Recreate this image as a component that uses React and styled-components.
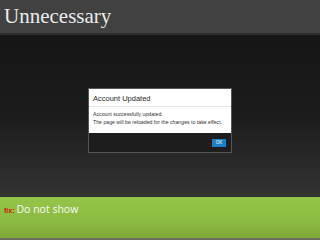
import React from 'react'
import styled, { createGlobalStyle } from 'styled-components'

const Global = createGlobalStyle`
  html, body { margin: 0; padding: 0; }
  body { width: 320px; height: 240px; overflow: hidden; background: #1a1a1a; }
`

const Slide = styled.div`
  width: 320px;
  height: 240px;
  display: flex;
  flex-direction: column;
`

const Header = styled.div`
  height: 33px;
  background: #414141;
  border-bottom: 2px solid #2d2d2d;
  display: flex;
  align-items: center;
  padding-left: 4px;
  font-family: "Liberation Serif", serif;
  font-size: 21px;
  color: #ececec;
`

const Stage = styled.div`
  flex: 1;
  background: linear-gradient(to bottom, #151515 0%, #1c1c1c 50%, #333 100%);
  display: flex;
  justify-content: center;
  padding-top: 53px;
`

const Dialog = styled.div`
  width: 142px;
  height: 63px;
  display: flex;
  flex-direction: column;
  border: 1px solid #555;
  font-family: "Liberation Sans", Arial, sans-serif;
`

const DialogTop = styled.div`
  background: #fff;
  height: 44px;
  display: flex;
  flex-direction: column;
`

const DialogTitle = styled.div`
  font-size: 7.5px;
  color: #2a2a2a;
  padding: 5px 4px 0;
  height: 18px;
  box-sizing: border-box;
  border-bottom: 1px solid #e5e5e5;
`

const DialogBody = styled.div`
  font-size: 5.2px;
  color: #333;
  padding: 4px 3px 0 4px;
  line-height: 7.5px;
  white-space: nowrap;
`

const DialogFoot = styled.div`
  flex: 1;
  background: #1d1d1d;
  display: flex;
  justify-content: flex-end;
  align-items: center;
  padding-right: 5px;
`

const OkButton = styled.div`
  width: 14px;
  height: 8px;
  background: #1a7fc4;
  color: #fff;
  font-size: 4.5px;
  display: flex;
  align-items: center;
  justify-content: center;
`

const Footer = styled.div`
  height: 43px;
  background: linear-gradient(to bottom, #95c449 0%, #8dbb42 60%, #7ea83a 100%);
  border-bottom: 2px solid #6d6d5d;
  box-sizing: border-box;
  display: flex;
  align-items: flex-start;
  padding: 5px 0 0 4px;
  gap: 2px;
`

const Fix = styled.span`
  color: #d01808;
  font-family: "Liberation Sans", Arial, sans-serif;
  font-weight: bold;
  font-size: 7px;
  margin-top: 5px;
`

const Note = styled.span`
  color: #fafafa;
  font-family: "Open Sans", sans-serif;
  font-size: 10.5px;
`

export default function App() {
  return (
    <Slide>
      <Global />
      <Header>Unnecessary</Header>
      <Stage>
        <Dialog>
          <DialogTop>
            <DialogTitle>Account Updated</DialogTitle>
            <DialogBody>
              Account successfully updated.<br />
              The page will be reloaded for the changes to take effect.
            </DialogBody>
          </DialogTop>
          <DialogFoot>
            <OkButton>OK</OkButton>
          </DialogFoot>
        </Dialog>
      </Stage>
      <Footer>
        <Fix>fix:</Fix>
        <Note>Do not show</Note>
      </Footer>
    </Slide>
  )
}
